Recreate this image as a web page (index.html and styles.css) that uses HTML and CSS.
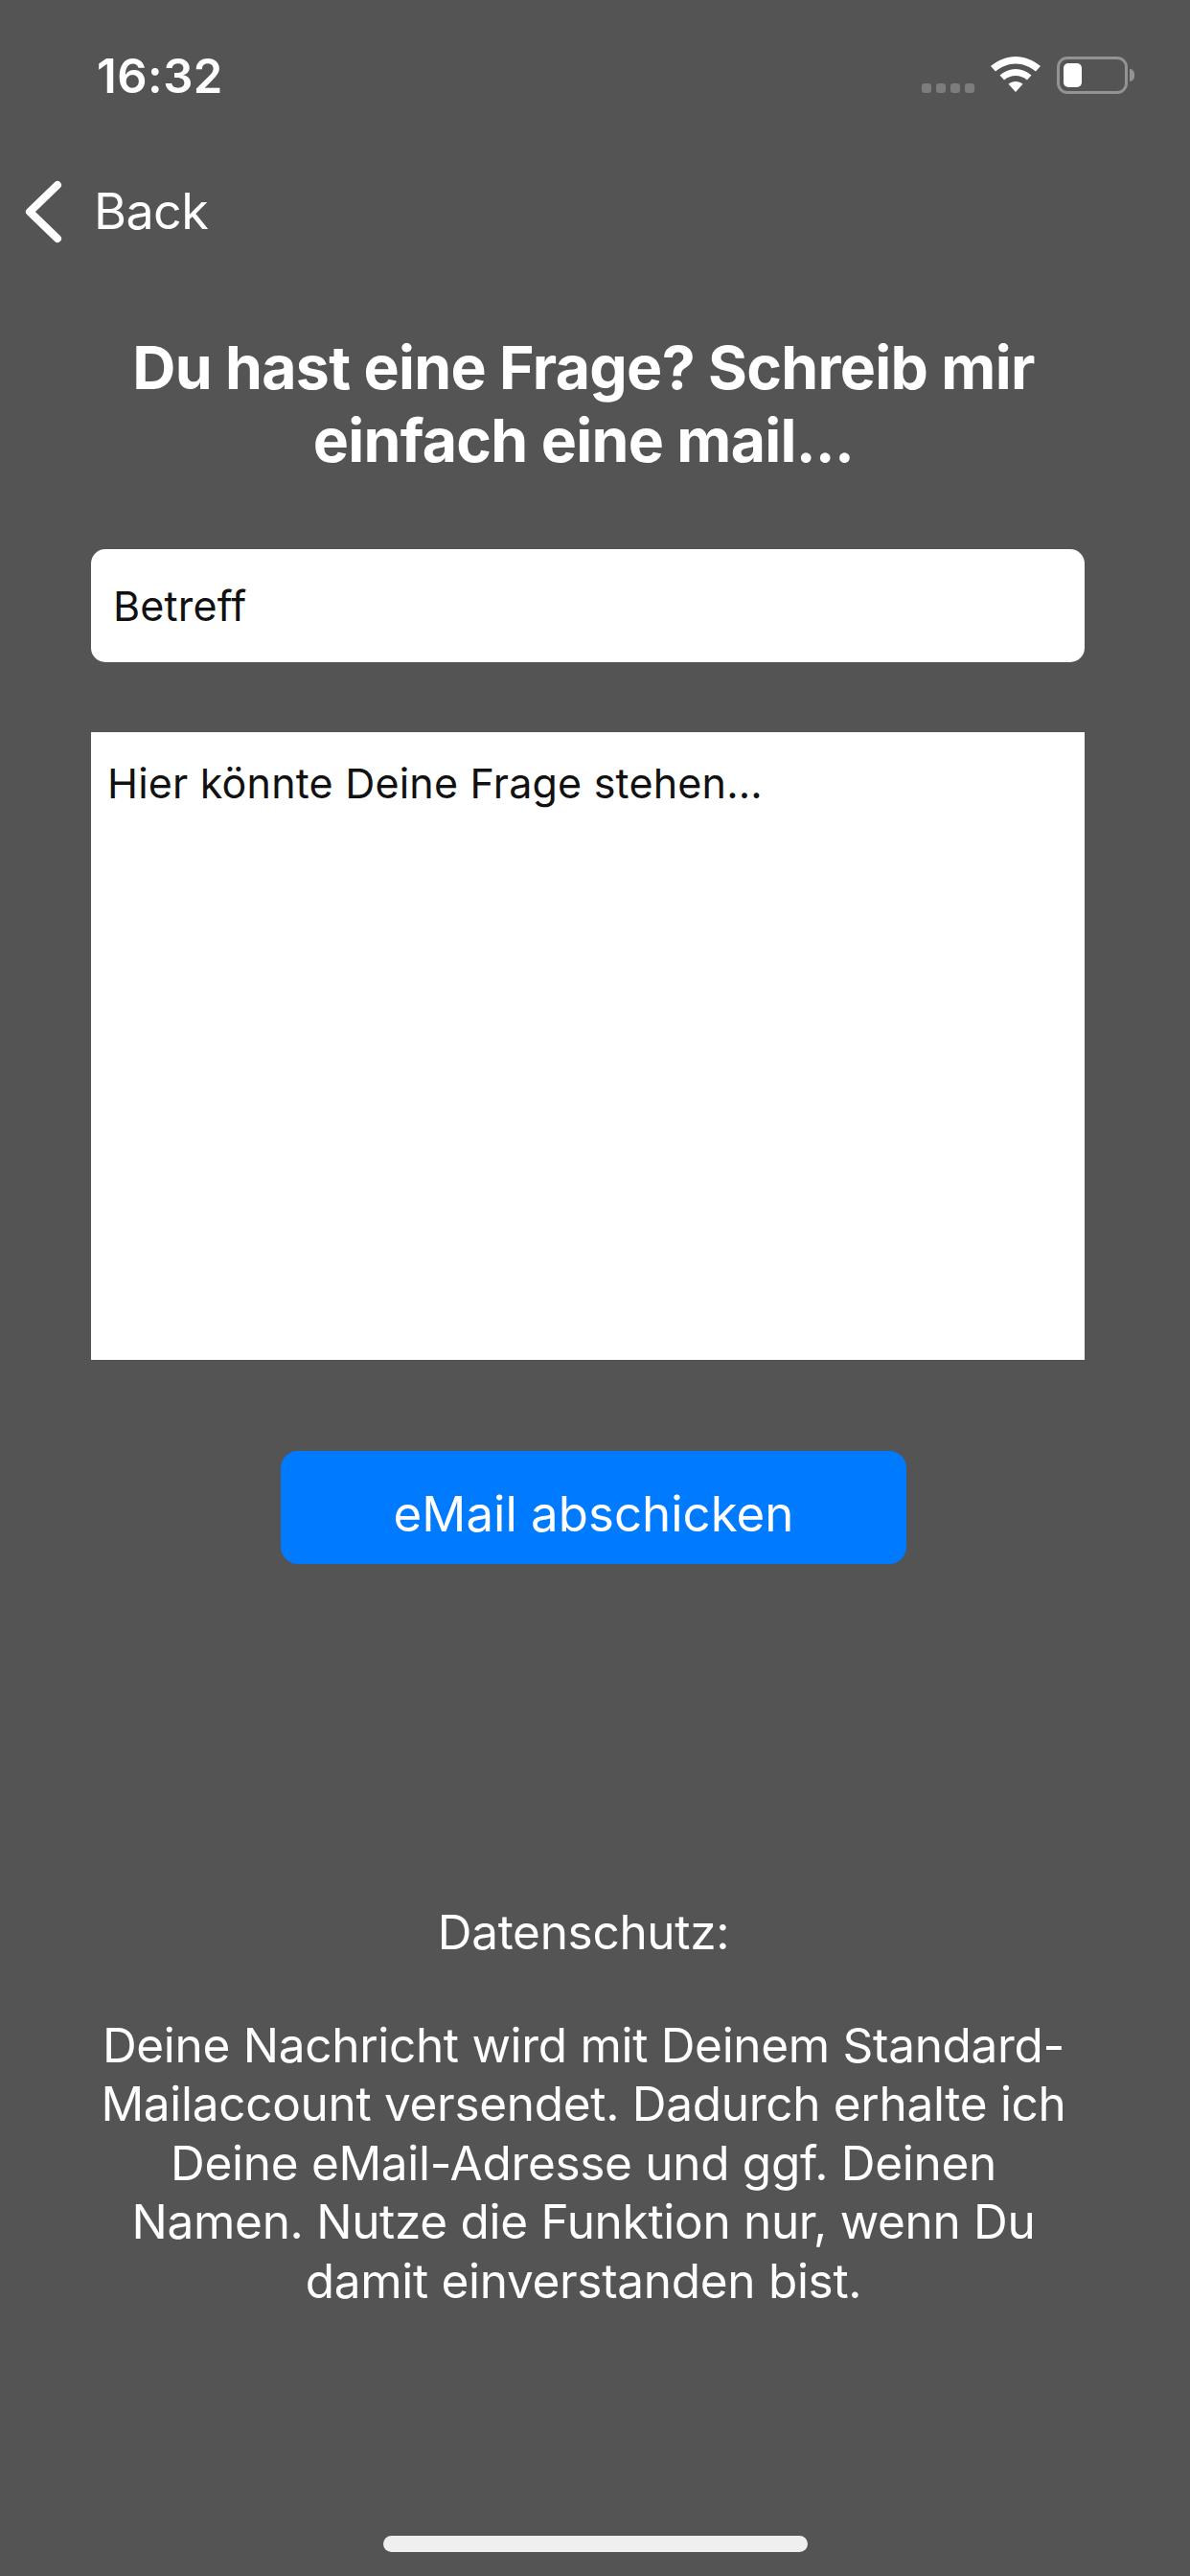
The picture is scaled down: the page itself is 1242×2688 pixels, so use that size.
FILE: index.html
```html
<!DOCTYPE html>
<html lang="de">
<head>
<meta charset="utf-8">
<title>Frage</title>
<link rel="stylesheet" href="styles.css">
</head>
<body>
<main class="page">
  <header class="status">
    <span class="time">16:32</span>
    <div class="status-icons">
      <div class="dots"><i></i><i></i><i></i><i></i></div>
      <svg class="wifi" width="52" height="38" viewBox="0 0 52 38"><path d="M26 1C16.500 1 8 4.800 0 11L5 16.500C11 11.500 18.500 8.500 26 8.500S41 11.500 47 16.500L52 11C44 4.800 35.500 1 26 1Z" fill="#fff"/><path d="M26 14C20 14 14.500 16.300 9.500 20.500L14 25.500C17.500 22.700 21.700 21 26 21S34.500 22.700 38 25.500L42.500 20.500C37.500 16.300 32 14 26 14Z" fill="#fff"/><path d="M26 27C23.300 27 20.800 28 18.500 29.800L26 38L33.500 29.800C31.200 28 28.700 27 26 27Z" fill="#fff"/></svg>
      <div class="battery"><div class="battery-body"><div class="battery-level"></div></div><div class="battery-cap"></div></div>
    </div>
  </header>
  <nav class="nav">
    <svg class="chevron" width="42" height="66" viewBox="0 0 42 66"><path d="M35 5L6 33L35 61" fill="none" stroke="#fff" stroke-width="8" stroke-linecap="round" stroke-linejoin="round"/></svg>
    <span class="back">Back</span>
  </nav>
  <h1 class="title">Du hast eine Frage? Schreib mir<br>einfach eine mail...</h1>
  <div class="subject">Betreff</div>
  <div class="message">Hier könnte Deine Frage stehen...</div>
  <button class="send" type="button">eMail abschicken</button>
  <section class="privacy">
    <p>Datenschutz:</p>
    <p>Deine Nachricht wird mit Deinem Standard-<br>Mailaccount versendet. Dadurch erhalte ich<br>Deine eMail-Adresse und ggf. Deinen<br>Namen. Nutze die Funktion nur, wenn Du<br>damit einverstanden bist.</p>
  </section>
  <div class="home"></div>
</main>
</body>
</html>
```
FILE: styles.css
```css
* { box-sizing: border-box; }
html, body { margin: 0; padding: 0; }
body { background: #545454; font-family: Inter, "Liberation Sans", sans-serif; color: #fff; }
.page { width: 1242px; height: 2688px; display: flex; flex-direction: column; align-items: flex-start; background: #545454; }
.status { width: 100%; height: 150px; display: flex; justify-content: space-between; align-items: flex-start; padding: 50px 58px 0 101px; }
.time { font-size: 49px; line-height: 60px; font-weight: 600; letter-spacing: 0.5px; }
.status-icons { display: flex; align-items: flex-start; padding-top: 8px; }
.dots { display: flex; gap: 5px; margin-top: 29px; margin-right: 17px; }
.dots i { width: 10px; height: 10px; border-radius: 3px; background: #7d7d7d; }
.wifi { margin-right: 17px; }
.battery { display: flex; align-items: center; margin-top: 1px; }
.battery-body { width: 74px; height: 39px; border: 3px solid #939393; border-radius: 11px; padding: 4px; }
.battery-level { width: 19px; height: 100%; background: #fff; border-radius: 5px; }
.battery-cap { width: 5px; height: 13px; margin-left: 2px; background: #939393; border-radius: 0 5px 5px 0; }
.nav { width: 100%; height: 66px; display: flex; align-items: center; padding-left: 25px; margin-top: 38px; }
.chevron { flex: none; }
.back { font-size: 52px; line-height: 66px; margin-left: 31px; letter-spacing: -0.6px; }
.title { width: 1218px; margin: 91px 0 0; font-size: 62.500px; line-height: 76px; font-weight: 700; text-align: center; letter-spacing: -0.7px; }
.subject { width: 1037px; height: 118px; margin: 76px 0 0 95px; padding-left: 23px; display: flex; align-items: center; background: #fff; color: #111; border-radius: 15px; font-size: 43px; letter-spacing: 0.2px; }
.message { width: 1037px; height: 655px; margin: 73px 0 0 95px; padding: 25px 17px; background: #fff; color: #111; font-size: 43px; line-height: 56px; letter-spacing: 0.2px; }
.send { width: 653px; height: 118px; margin: 95px 0 0 293px; border: 0; border-radius: 18px; background: #007aff; color: #fff; font-family: inherit; font-size: 51px; letter-spacing: 0; padding: 12px 0 0; }
.privacy { width: 1218px; margin-top: 354px; text-align: center; font-size: 49.500px; line-height: 61.500px; letter-spacing: -0.3px; }
.privacy p { margin: 0 0 56px; }
.home { width: 443px; height: 17px; margin: auto 0 25px 400px; border-radius: 9px; background: #efefef; }
```
